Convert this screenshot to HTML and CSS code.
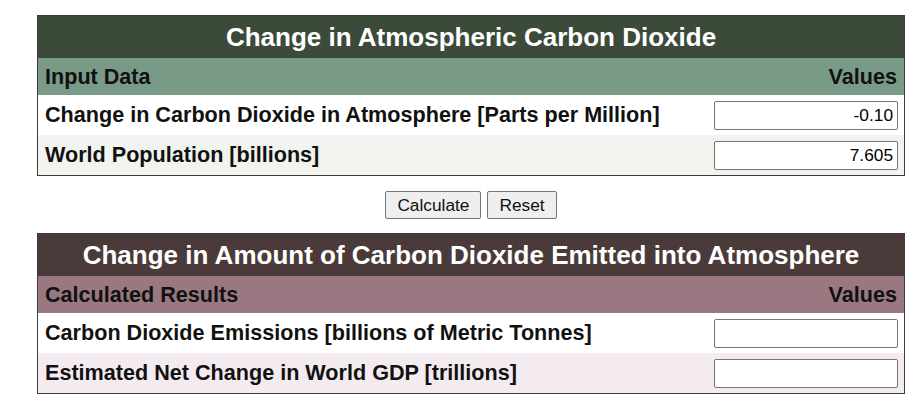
FILE: index.html
```html
<!DOCTYPE html>
<html lang="en">
<head>
    <meta charset="UTF-8">
    <title>Change in Atmospheric Carbon Dioxide</title>
    <link rel="stylesheet" href="styles.css">
</head>
<body>

<div class="page">
    <!-- Input table -->
    <table class="calc green">
        <tr class="title"><th colspan="2">Change in Atmospheric Carbon Dioxide</th></tr>
        <tr class="head"><td>Input Data</td><td class="val">Values</td></tr>
        <tr><td>Change in Carbon Dioxide in Atmosphere [Parts per Million]</td><td class="val"><input type="text" value="-0.10"></td></tr>
        <tr class="alt"><td>World Population [billions]</td><td class="val"><input type="text" value="7.605"></td></tr>
    </table>

    <div class="buttons">
        <button>Calculate</button>
        <button>Reset</button>
    </div>

    <!-- Results table -->
    <table class="calc brown">
        <tr class="title"><th colspan="2">Change in Amount of Carbon Dioxide Emitted into Atmosphere</th></tr>
        <tr class="head"><td>Calculated Results</td><td class="val">Values</td></tr>
        <tr><td>Carbon Dioxide Emissions [billions of Metric Tonnes]</td><td class="val"><input type="text"></td></tr>
        <tr class="alt"><td>Estimated Net Change in World GDP [trillions]</td><td class="val"><input type="text"></td></tr>
    </table>
</div>

</body>
</html>
```

FILE: styles.css
```css
body {
    margin: 0;
    font-family: 'Liberation Sans', Arial, sans-serif;
    background: white;
}
.page {
    padding: 15px 0 0 37px;
}
.calc {
    width: 868px;
    border-collapse: collapse;
    border: 1px solid #3a3a3a;
}
.calc td, .calc th {
    padding: 0 7px;
}
.calc .title th {
    height: 42px;
    font-size: 26px;
    font-weight: bold;
    color: white;
    text-align: center;
}
.calc .head td {
    height: 37px;
    font-size: 21.6px;
    font-weight: bold;
    color: #111;
}
.calc tr td {
    height: 40px;
    font-size: 21.6px;
    font-weight: bold;
    color: #111;
    background: white;
}
.calc .val {
    text-align: right;
}
.green .title th { background: #3c4a3a; }
.green .head td { background: #7a9a88; }
.green .alt td { background: #f1f3ee; }
.brown .title th { background: #4b3a3a; }
.brown .head td { background: #9a7882; }
.brown .alt td { background: #f3ebef; }
input {
    width: 184px;
    height: 29px;
    box-sizing: border-box;
    border: 1px solid #767676;
    border-radius: 2px;
    font-family: 'Liberation Sans', Arial, sans-serif;
    font-size: 17.3px;
    text-align: right;
    padding: 0 4px;
    vertical-align: middle;
    margin-right: -1px;
}
.buttons {
    display: flex;
    justify-content: center;
    gap: 6px;
    padding: 15px 0 14px;
    width: 868px;
}
button {
    height: 28px;
    font-family: 'Liberation Sans', Arial, sans-serif;
    font-size: 17.3px;
    color: #111;
    background: #efefef;
    border: 1px solid #767676;
    border-radius: 2px;
    padding: 0 11px;
}
```
